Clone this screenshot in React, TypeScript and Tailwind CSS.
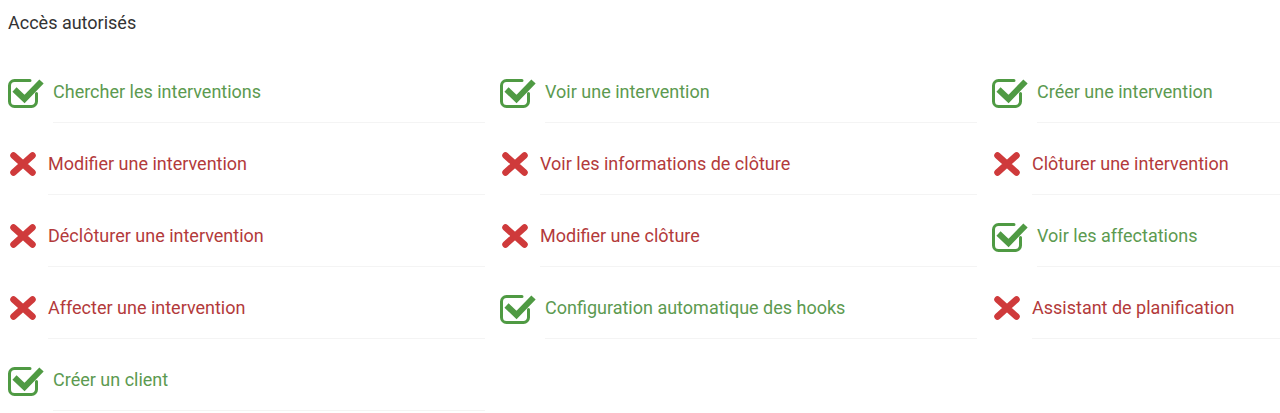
import React from "react";

type Access = { label: string; ok: boolean };

const items: Access[] = [
  { label: "Chercher les interventions", ok: true },
  { label: "Voir une intervention", ok: true },
  { label: "Créer une intervention", ok: true },
  { label: "Modifier une intervention", ok: false },
  { label: "Voir les informations de clôture", ok: false },
  { label: "Clôturer une intervention", ok: false },
  { label: "Déclôturer une intervention", ok: false },
  { label: "Modifier une clôture", ok: false },
  { label: "Voir les affectations", ok: true },
  { label: "Affecter une intervention", ok: false },
  { label: "Configuration automatique des hooks", ok: true },
  { label: "Assistant de planification", ok: false },
  { label: "Créer un client", ok: true },
];

const CheckIcon = () => (
  <svg width="36" height="34" viewBox="0 0 36 34" fill="none">
    <path
      d="M22 5.5 H6.5 A5 5 0 0 0 1.5 10.5 V26.5 A5 5 0 0 0 6.5 31.5 H23.5 A5 5 0 0 0 28.5 26.5 V18.5"
      stroke="#4f9a43"
      strokeWidth="3"
      strokeLinecap="round"
    />
    <path
      d="M6.5 14.5 L16.5 24 L33.5 6.5"
      stroke="#4f9a43"
      strokeWidth="6"
      strokeLinejoin="miter"
    />
  </svg>
);

const CrossIcon = () => (
  <svg width="28" height="24" viewBox="0 0 28 24" fill="none">
    <path
      d="M4.5 3.5 L23.5 20.5 M23.5 3.5 L4.5 20.5"
      stroke="#cf3a3b"
      strokeWidth="6.5"
      strokeLinecap="round"
    />
  </svg>
);

const AccessItem = ({ label, ok }: Access) => (
  <div className="flex h-[72px]">
    <div className={`flex items-center pt-[9px] ${ok ? "w-[45px]" : "w-[40px] pl-px"}`}>
      {ok ? <CheckIcon /> : <CrossIcon />}
    </div>
    <div
      className={`mr-[15px] flex flex-1 items-center border-b border-[#f4f4f4] pt-[9px] text-[18px] ${
        ok ? "text-[#5c9a50]" : "text-[#b33a3b]"
      }`}
    >
      {label}
    </div>
  </div>
);

export default function App() {
  return (
    <main className="min-h-screen w-full overflow-hidden bg-white font-['Roboto','Noto_Sans',sans-serif]">
      <div className="w-[1492px] px-2">
        {/* Title */}
        <div className="h-[51px] pt-[10px] text-[18px] leading-[26px] text-[#333]">Accès autorisés</div>

        {/* Access grid */}
        <div className="grid grid-cols-3">
          {items.map((item) => (
            <AccessItem key={item.label} {...item} />
          ))}
        </div>
      </div>
    </main>
  );
}
